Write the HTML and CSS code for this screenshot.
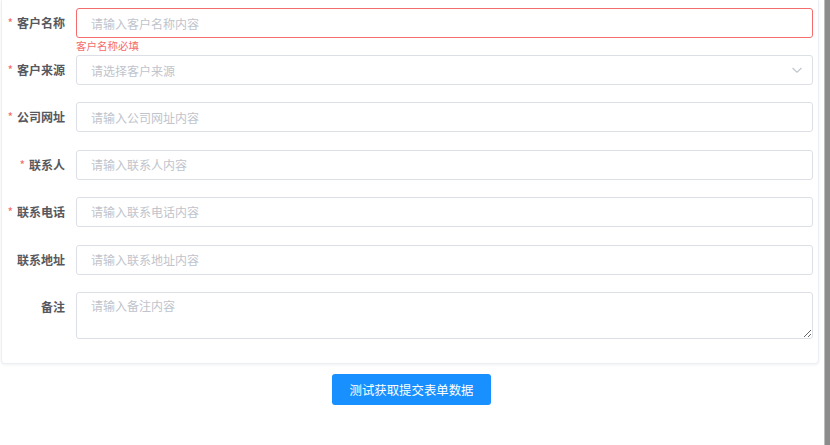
FILE: index.html
```html
<!DOCTYPE html>
<html lang="zh-CN">
<head>
  <meta charset="UTF-8" />
  <meta name="viewport" content="width=device-width, initial-scale=1.0"/>
  <title>客户信息表单</title>
  <link rel="stylesheet" href="styles.css">
</head>
<body>
  <div class="page">
    <form class="card" id="customerForm">
      <div class="form-item is-error">
        <label class="form-label required" for="name">客户名称</label>
        <div class="form-content">
          <input class="form-input" id="name" type="text" placeholder="请输入客户名称内容"/>
          <div class="form-error">客户名称必填</div>
        </div>
      </div>

      <div class="form-item">
        <label class="form-label required" for="source">客户来源</label>
        <div class="form-content">
          <div class="select">
            <input class="form-input" id="source" type="text" placeholder="请选择客户来源" readonly/>
            <svg class="select-arrow" viewBox="0 0 12 12" width="12" height="12">
              <path d="M1.5 4 L6 8.2 L10.5 4" fill="none" stroke="#c0c4cc" stroke-width="1.1"/>
            </svg>
          </div>
        </div>
      </div>

      <div class="form-item">
        <label class="form-label required" for="site">公司网址</label>
        <div class="form-content">
          <input class="form-input" id="site" type="text" placeholder="请输入公司网址内容"/>
        </div>
      </div>

      <div class="form-item">
        <label class="form-label required" for="contact">联系人</label>
        <div class="form-content">
          <input class="form-input" id="contact" type="text" placeholder="请输入联系人内容"/>
        </div>
      </div>

      <div class="form-item">
        <label class="form-label required" for="phone">联系电话</label>
        <div class="form-content">
          <input class="form-input" id="phone" type="text" placeholder="请输入联系电话内容"/>
        </div>
      </div>

      <div class="form-item">
        <label class="form-label" for="address">联系地址</label>
        <div class="form-content">
          <input class="form-input" id="address" type="text" placeholder="请输入联系地址内容"/>
        </div>
      </div>

      <div class="form-item">
        <label class="form-label" for="remark">备注</label>
        <div class="form-content">
          <textarea class="form-textarea" id="remark" placeholder="请输入备注内容"></textarea>
        </div>
      </div>
    </form>

    <div class="actions">
      <button class="btn-primary" type="button">测试获取提交表单数据</button>
    </div>
  </div>

  <div class="scrollbar"></div>
</body>
</html>
```

FILE: styles.css
```css
body {
  margin: 0;
  font-family: "Noto Sans CJK SC", "Liberation Sans", sans-serif;
  background: #fff;
  color: #606266;
}

.page {
  width: 818px;
  margin-left: 1px;
}

.card {
  border: 1px solid #ebeef5;
  border-top: none;
  border-radius: 0 0 4px 4px;
  box-shadow: 0 1px 3px rgba(0, 0, 0, 0.06);
  padding: 8px 5px 7px 0;
  background: #fff;
}

.form-item {
  display: flex;
  align-items: flex-start;
  margin-bottom: 17.2px;
}

.form-item:nth-child(5) {
  margin-bottom: 18px;
}

.form-label {
  width: 63px;
  flex-shrink: 0;
  padding-right: 11px;
  text-align: right;
  font-size: 12px;
  font-weight: 700;
  line-height: 30px;
  color: #55585f;
}

.form-label.required::before {
  content: "*";
  color: #f56c6c;
  margin-right: 4px;
  font-weight: 400;
}

.form-content {
  flex: 1;
  position: relative;
}

.form-input {
  display: block;
  box-sizing: border-box;
  width: 100%;
  height: 30px;
  padding: 0 14px;
  border: 1px solid #dcdfe6;
  border-radius: 3px;
  font-family: inherit;
  font-size: 12px;
  color: #606266;
  outline: none;
  background: #fff;
}

.form-input::placeholder,
.form-textarea::placeholder {
  color: #c0c4cc;
}

.is-error .form-input {
  border-color: #f56c6c;
}

.form-error {
  position: absolute;
  left: 0;
  top: 31px;
  font-size: 10.5px;
  line-height: 14px;
  color: #f56c6c;
}

.select {
  position: relative;
}

.select-arrow {
  position: absolute;
  right: 10px;
  top: 9px;
}

.form-textarea {
  display: block;
  box-sizing: border-box;
  width: 100%;
  height: 47px;
  padding: 4px 14px;
  border: 1px solid #dcdfe6;
  border-radius: 3px;
  font-family: inherit;
  font-size: 12px;
  line-height: 1.5;
  color: #606266;
  outline: none;
  resize: vertical;
}

.actions {
  display: flex;
  justify-content: center;
  padding-top: 10px;
  padding-left: 3px;
}

.btn-primary {
  width: 159px;
  height: 31px;
  border: none;
  border-radius: 3px;
  background: #1890ff;
  color: #fff;
  font-family: inherit;
  font-size: 12.4px;
  cursor: pointer;
}

.scrollbar {
  position: fixed;
  top: 0;
  right: 0;
  width: 5px;
  height: 100%;
  background: #8c8c8c;
  border-left: 1px solid #bdbdbd;
}
```
